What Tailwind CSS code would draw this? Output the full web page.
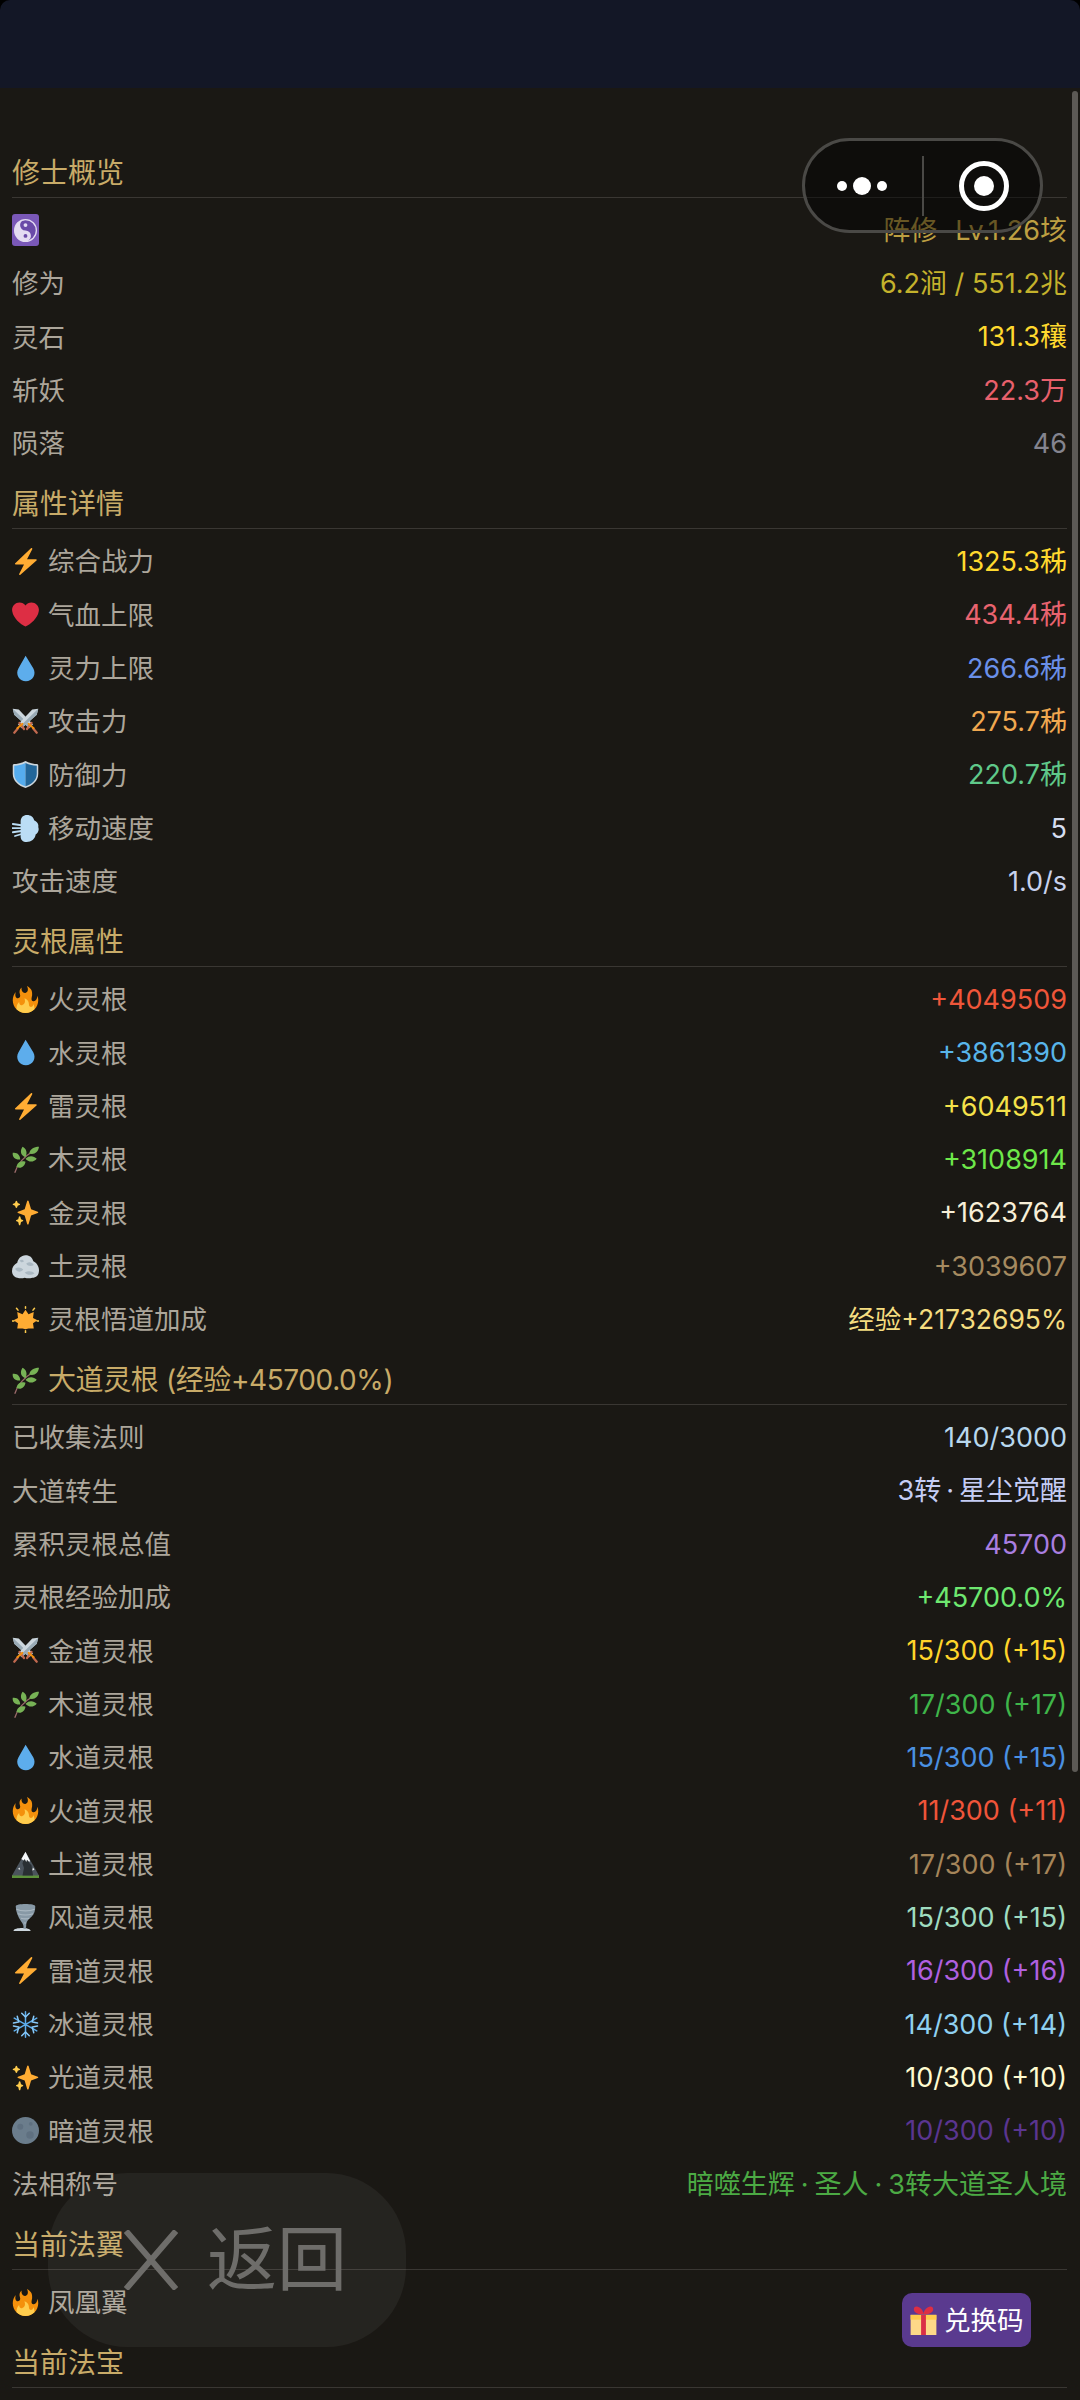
<!DOCTYPE html>
<html lang="zh-CN">
<head>
<meta charset="utf-8">
<title>修士概览</title>
<script src="https://cdn.jsdelivr.net/npm/@tailwindcss/browser@4"></script>
</head>
<body class="bg-black">
<svg class="hidden" xmlns="http://www.w3.org/2000/svg">
  <symbol id="zap" viewBox="0 0 36 36"><path fill="#FFAC33" d="M32 15H20L27 1.500c.5-1-.8-2-1.700-1.100L4.300 20.300C3.500 21 4 22 5 22h11L9.500 34.500c-.5 1 .8 2 1.700 1.100l21.500-19c.7-.7.300-1.600-.7-1.600z"/></symbol>
  <symbol id="heart" viewBox="0 0 36 36"><path fill="#DD2E44" d="M35.885 11.833c0-5.45-4.418-9.868-9.867-9.868-3.308 0-6.227 1.633-8.018 4.129-1.791-2.496-4.71-4.129-8.017-4.129-5.45 0-9.868 4.417-9.868 9.868 0 .772.098 1.52.266 2.241C1.751 22.587 11.216 31.568 18 34.034c6.783-2.466 16.249-11.447 17.617-19.959.17-.721.268-1.469.268-2.242z"/></symbol>
  <symbol id="drop" viewBox="0 0 36 36"><path fill="#5DADEC" d="M28.344 17.768L18.148 1.09 8.7 17.654c-2.2 3.51-2.392 8.074-.081 11.854 3.285 5.373 10.363 7.098 15.811 3.857 5.446-3.24 7.199-10.22 3.914-15.597z"/></symbol>
  <symbol id="fire" viewBox="0 0 36 36"><path fill="#F4900C" d="M35 19c0-2.062-.367-4.039-1.04-5.868-.46 5.389-3.333 8.157-6.335 6.868-2.812-1.208-.917-5.917-.777-8.164.236-3.809-.012-8.169-6.931-11.794 2.875 5.5.333 8.917-2.333 9.125-2.958.231-5.667-2.542-4.667-7.042-3.238 2.386-3.332 6.402-2.333 9 1.042 2.708-.042 4.958-2.583 5.208-2.84.28-4.418-3.041-2.963-8.333C2.52 10.965 1 14.805 1 19c0 9.389 7.611 17 17 17s17-7.611 17-17z"/><path fill="#FFCC4D" d="M28.394 23.999c.148 3.084-2.561 4.293-4.019 3.709-2.106-.843-1.541-2.291-2.083-5.291s-2.625-5.083-5.708-6c2.25 6.333-1.247 8.667-3.08 9.084-1.872.426-3.753-.001-3.968-4.007C7.352 23.668 6 26.676 6 30c0 .368.023.73.055 1.09C9.125 34.124 13.342 36 18 36s8.875-1.876 11.945-4.91c.032-.36.055-.722.055-1.09 0-2.187-.584-4.236-1.606-6.001z"/></symbol>
  <symbol id="sparkles" viewBox="0 0 36 36"><path fill="#FFAC33" d="M34.347 16.893l-8.899-3.294-3.323-10.891c-.128-.42-.517-.708-.956-.708-.439 0-.828.288-.956.708l-3.322 10.891-8.9 3.294c-.393.146-.653.519-.653.938 0 .418.26.793.653.938l8.895 3.293 3.324 11.223c.126.424.516.715.959.715.442 0 .833-.291.959-.716l3.324-11.223 8.896-3.293c.391-.144.652-.518.652-.937 0-.418-.261-.792-.653-.938z"/><path fill="#FFCC4D" d="M14.347 27.894l-2.314-.856-.9-3.3c-.118-.436-.513-.738-.964-.738-.451 0-.846.302-.965.737l-.9 3.3-2.313.856c-.393.145-.653.52-.653.938 0 .418.26.793.653.938l2.301.853.907 3.622c.112.444.511.756.97.756.459 0 .858-.312.97-.757l.907-3.622 2.301-.853c.393-.144.653-.519.653-.937 0-.418-.26-.793-.653-.937zM10.009 6.231l-2.364-.875-.876-2.365c-.145-.393-.519-.653-.938-.653-.418 0-.792.26-.938.653l-.875 2.365-2.365.875c-.393.146-.653.52-.653.938 0 .418.26.793.653.938l2.365.875.875 2.365c.146.393.52.653.938.653.418 0 .792-.26.938-.653l.875-2.365 2.365-.875c.393-.146.653-.52.653-.938 0-.418-.26-.792-.653-.938z"/></symbol>
  <symbol id="herb" viewBox="0 0 36 36"><path fill="none" stroke="#9a6a6a" stroke-width="1.800" stroke-linecap="round" d="M4 35C7 25 13 16 28 7"/><path fill="#77B255" d="M14 1c5 2 7 8 4 14-6-2-8-8-4-14zM23 10c1-6 6-9 13-9-1 7-6 11-13 9zM18 17c5-5 11-4 15 0-4 5-11 5-15 0zM1 9c6-1 10 3 10 9-6 1-11-3-10-9zM6 28c1-6 6-9 12-7-1 6-6 10-12 7z"/></symbol>
  <symbol id="swords" viewBox="0 0 36 36"><path fill="#CCD6DD" d="M1 1l8 1 19 20-5 5L3 9z"/><path fill="#99AAB5" d="M1 1l24.500 23.500-2.500 2.500L3 9z"/><path fill="#CCD6DD" d="M35 1l-8 1L8 22l5 5 20-18z"/><path fill="#99AAB5" d="M35 1L10.500 24.500l2.500 2.500L33 9z"/><path fill="none" stroke="#C1694F" stroke-width="3" stroke-linecap="round" d="M26 20l-6 8M10 20l6 8M28 27l5 6M8 27l-5 6"/><path fill="none" stroke="#F4900C" stroke-width="2.400" stroke-linecap="round" d="M22 21l7 6M14 21l-7 6"/></symbol>
  <symbol id="shield" viewBox="0 0 36 36"><path fill="#CCD6DD" d="M18 0c6 3 11 4 15 4 1 0 2 .7 2 2v11c0 10-8 16-17 19C9 33 1 27 1 17V6c0-1.300 1-2 2-2 4 0 9-1 15-4z"/><path fill="#55ACEE" d="M18 2.500C12.500 5 8 6 3 6.200V17c0 8.800 7 14 15 16.800z"/><path fill="#226699" d="M18 2.500c5.500 2.500 10 3.500 15 3.700V17c0 8.800-7 14-15 16.800z"/></symbol>
  <symbol id="dash" viewBox="0 0 36 36"><path fill="#BBDDF5" d="M20 0c5 0 9 3 9.500 7C33 8.500 36 12 35 16c1.500 4 0 8-3.500 10-.5 6-6 10-12 10-5 0-8-3-8-7.500V8C12 3 15 0 20 0z"/><path fill="none" stroke="#BBDDF5" stroke-width="2.400" stroke-linecap="round" d="M1 12l14 2M0 17.500h15M1 23l14-2M4 28l10-3"/></symbol>
  <symbol id="rock" viewBox="0 0 36 36"><path fill="#CCD6DD" d="M18 3c6 0 9 3 10.500 8C33 13 36 18 36 23c0 7-4 10-9 10-3 1-7 1-10 0-3 1-7 1-10 0-4-1-7-4-7-9 0-5 3-9 7-11 1-5 5-10 11-10z"/><path fill="#AAB8C2" d="M4 21c4-3 8-2 11 1-3 4-8 4-11-1zM19 14c4-3 8-2 10 2-3 2-8 2-10-2zM17 26c5-3 10-2 13 1-4 3-10 3-13-1zM10 10c3-2 5-1 6 1-2 2-4 2-6-1z"/></symbol>
  <symbol id="sun" viewBox="0 0 36 36"><path fill="#FFAC33" d="M18 5l4 6 7-3-1 8 6 3-6 4 1 7-7 0-4 1-4-1-7 0 1-7-6-4 6-3-1-8 7 3z"/><path fill="none" stroke="#FFCC4D" stroke-width="2" stroke-linecap="round" d="M18 1v2M18 33v2.500M0 20h2.500M33.500 20H36M6 3l2 2.500M30 3l-2 2.500"/></symbol>
  <symbol id="mountain" viewBox="0 0 36 36"><path fill="#5C913B" d="M0 32h36v4H0z"/><path fill="#4B545D" d="M18 1L0 32.500h36z"/><path fill="#292F33" d="M18 1l5 15 3 3 2 13.500H14l2-10-2-6z"/><path fill="#F5F8FA" d="M18 1l-5.500 9.500 3 2 1.500-2 2 4 1-3 3 3 1-1.500zM8 24l2-2 1 3zM28 22l2 3-3 1z"/></symbol>
  <symbol id="tornado" viewBox="0 0 36 36"><path fill="#CCD6DD" d="M2 36c0-3 6-4 12-4 5 0 10 1 11 4z"/><path fill="#8899A6" d="M5 3c0-2 6-3 13-3s13 1 13 3c0 6-1 10-5 14-3 3-6 5-7 9 0 3 0 5-1 7h-3c1-3 0-6-3-10C8 17 5 10 5 3z"/><path fill="none" stroke="#AAB8C2" stroke-width="1.600" d="M6 7c6 3 18 3 24 0M8 13c6 2 14 2 20 0M12 19c4 1 8 1 11 0M16 25c1 .5 2 .5 3 0"/></symbol>
  <symbol id="snow" viewBox="0 0 36 36"><g fill="none" stroke="#88C9F9" stroke-width="2" stroke-linecap="round"><path stroke="#5DADEC" d="M18 1v34M3 9.500l30 17M33 9.500l-30 17"/><path d="M13 3l5 5 5-5M13 33l5-5 5 5M2 16l7-1.500L7 7M34 16l-7-1.500L29 7M2 20l7 1.500L7 29M34 20l-7 1.500L29 29"/></g></symbol>
  <symbol id="moon" viewBox="0 0 36 36"><circle fill="#6b7d8c" cx="18" cy="18" r="18"/><circle fill="#5f7080" cx="11" cy="13" r="4"/><circle fill="#5f7080" cx="24" cy="24" r="5"/><circle fill="#5f7080" cx="25" cy="9" r="2.500"/></symbol>
  <symbol id="gift" viewBox="0 0 36 36"><path fill="#FDD888" d="M2 11h32v25H2z"/><path fill="#FFCC4D" d="M2 11h32v6H2z"/><path fill="#DA2F47" d="M15 11h6v25h-6z"/><path fill="#DD2E44" d="M18 10C13 11 6 9 6 4c0-4 4-4 7-2 3 2 5 5 5 8zM18 10c5 1 12-1 12-6 0-4-4-4-7-2-3 2-5 5-5 8z"/></symbol>
</svg>

<div class="relative h-[2400px] w-[1080px] overflow-hidden font-['Inter','Noto_Sans_CJK_SC',sans-serif] text-[26.5px] leading-none text-[#aca69b]">
  <div class="h-[88px] rounded-t-[10px] bg-[#131726]"></div>

  <main class="h-[2312px] bg-[#1a1814] pl-[12px] pr-[13px] pt-[51px]">
    <!-- 修士概览 -->
    <h2 class="mb-[5.67px] h-[59px] border-b border-[#3a3733] pb-[4px] pt-[14px] text-[28px] leading-[40px] font-normal text-[#c8ab68]">修士概览</h2>
    <div class="flex h-[53.33px] items-center justify-between">
      <span class="flex h-[32px] w-[27px] items-center justify-center rounded-[3px] bg-[#7a58b8]">
        <svg class="h-[25px] w-[23px]" viewBox="0 0 36 36"><circle cx="18" cy="18" r="17" fill="#6a4aa8" stroke="#e4dcf2" stroke-width="2"/><path fill="#e4dcf2" d="M18 1a17 17 0 0 0 0 34 8.500 8.500 0 0 0 0-17 8.500 8.500 0 0 1 0-17z"/><circle cx="18" cy="9.500" r="3" fill="#e4dcf2"/><circle cx="18" cy="26.500" r="3" fill="#6a4aa8"/></svg>
      </span>
      <span class="text-[27px] text-[#bd9f42]">阵修<span class="ml-[18px]">Lv.1.26垓</span></span>
    </div>
    <div class="flex h-[53.33px] items-center justify-between"><span>修为</span><span class="text-[27px] text-[#c4b22c]">6.2涧 / 551.2兆</span></div>
    <div class="flex h-[53.33px] items-center justify-between"><span>灵石</span><span class="text-[27px] text-[#ffd92e]">131.3穰</span></div>
    <div class="flex h-[53.33px] items-center justify-between"><span>斩妖</span><span class="text-[27px] text-[#e8606c]">22.3万</span></div>
    <div class="flex h-[53.33px] items-center justify-between"><span>陨落</span><span class="text-[27px] text-[#84848f]">46</span></div>

    <!-- 属性详情 -->
    <h2 class="mb-[5.67px] h-[59px] border-b border-[#3a3733] pb-[4px] pt-[14px] text-[28px] leading-[40px] font-normal text-[#c8ab68]">属性详情</h2>
    <div class="flex h-[53.33px] items-center justify-between"><span class="flex items-center gap-[9px]"><svg class="h-[27px] w-[27px]"><use href="#zap"/></svg>综合战力</span><span class="text-[27px] text-[#ffd92e]">1325.3秭</span></div>
    <div class="flex h-[53.33px] items-center justify-between"><span class="flex items-center gap-[9px]"><svg class="h-[27px] w-[27px]"><use href="#heart"/></svg>气血上限</span><span class="text-[27px] text-[#e8636f]">434.4秭</span></div>
    <div class="flex h-[53.33px] items-center justify-between"><span class="flex items-center gap-[9px]"><svg class="h-[27px] w-[27px]"><use href="#drop"/></svg>灵力上限</span><span class="text-[27px] text-[#6a8fe8]">266.6秭</span></div>
    <div class="flex h-[53.33px] items-center justify-between"><span class="flex items-center gap-[9px]"><svg class="h-[27px] w-[27px]"><use href="#swords"/></svg>攻击力</span><span class="text-[27px] text-[#f0a850]">275.7秭</span></div>
    <div class="flex h-[53.33px] items-center justify-between"><span class="flex items-center gap-[9px]"><svg class="h-[27px] w-[27px]"><use href="#shield"/></svg>防御力</span><span class="text-[27px] text-[#5fc98a]">220.7秭</span></div>
    <div class="flex h-[53.33px] items-center justify-between"><span class="flex items-center gap-[9px]"><svg class="h-[27px] w-[27px]"><use href="#dash"/></svg>移动速度</span><span class="text-[27px] text-[#d5ddf0]">5</span></div>
    <div class="flex h-[53.33px] items-center justify-between"><span>攻击速度</span><span class="text-[27px] text-[#c8d2ee]">1.0/s</span></div>

    <!-- 灵根属性 -->
    <h2 class="mb-[5.67px] h-[59px] border-b border-[#3a3733] pb-[4px] pt-[14px] text-[28px] leading-[40px] font-normal text-[#c8ab68]">灵根属性</h2>
    <div class="flex h-[53.33px] items-center justify-between"><span class="flex items-center gap-[9px]"><svg class="h-[27px] w-[27px]"><use href="#fire"/></svg>火灵根</span><span class="text-[27px] text-[#f0563a]">+4049509</span></div>
    <div class="flex h-[53.33px] items-center justify-between"><span class="flex items-center gap-[9px]"><svg class="h-[27px] w-[27px]"><use href="#drop"/></svg>水灵根</span><span class="text-[27px] text-[#58b5ea]">+3861390</span></div>
    <div class="flex h-[53.33px] items-center justify-between"><span class="flex items-center gap-[9px]"><svg class="h-[27px] w-[27px]"><use href="#zap"/></svg>雷灵根</span><span class="text-[27px] text-[#f5e24a]">+6049511</span></div>
    <div class="flex h-[53.33px] items-center justify-between"><span class="flex items-center gap-[9px]"><svg class="h-[27px] w-[27px]"><use href="#herb"/></svg>木灵根</span><span class="text-[27px] text-[#6ee84a]">+3108914</span></div>
    <div class="flex h-[53.33px] items-center justify-between"><span class="flex items-center gap-[9px]"><svg class="h-[27px] w-[27px]"><use href="#sparkles"/></svg>金灵根</span><span class="text-[27px] text-[#f7efd8]">+1623764</span></div>
    <div class="flex h-[53.33px] items-center justify-between"><span class="flex items-center gap-[9px]"><svg class="h-[27px] w-[27px]"><use href="#rock"/></svg>土灵根</span><span class="text-[27px] text-[#a58a60]">+3039607</span></div>
    <div class="flex h-[53.33px] items-center justify-between"><span class="flex items-center gap-[9px]"><svg class="h-[27px] w-[27px]"><use href="#sun"/></svg>灵根悟道加成</span><span class="text-[26.5px] text-[#f5dd80]">经验+21732695%</span></div>

    <!-- 大道灵根 -->
    <h2 class="mb-[5.67px] flex h-[59px] items-center gap-[9px] border-b border-[#3a3733] pb-[4px] pt-[14px] text-[28px] leading-[40px] font-normal tracking-[-0.4px] text-[#c8ab68]"><svg class="h-[27px] w-[27px]"><use href="#herb"/></svg>大道灵根 (经验+45700.0%)</h2>
    <div class="flex h-[53.33px] items-center justify-between"><span>已收集法则</span><span class="text-[27px] text-[#b8d8ee]">140/3000</span></div>
    <div class="flex h-[53.33px] items-center justify-between"><span>大道转生</span><span class="text-[27px] text-[#c5cdf5]">3转<span class="px-[5px]">·</span>星尘觉醒</span></div>
    <div class="flex h-[53.33px] items-center justify-between"><span>累积灵根总值</span><span class="text-[27px] text-[#a97ee0]">45700</span></div>
    <div class="flex h-[53.33px] items-center justify-between"><span>灵根经验加成</span><span class="text-[27px] text-[#6ee870]">+45700.0%</span></div>
    <div class="flex h-[53.33px] items-center justify-between"><span class="flex items-center gap-[9px]"><svg class="h-[27px] w-[27px]"><use href="#swords"/></svg>金道灵根</span><span class="text-[27px] text-[#ffd42a]">15/300 (+15)</span></div>
    <div class="flex h-[53.33px] items-center justify-between"><span class="flex items-center gap-[9px]"><svg class="h-[27px] w-[27px]"><use href="#herb"/></svg>木道灵根</span><span class="text-[27px] text-[#3fb54a]">17/300 (+17)</span></div>
    <div class="flex h-[53.33px] items-center justify-between"><span class="flex items-center gap-[9px]"><svg class="h-[27px] w-[27px]"><use href="#drop"/></svg>水道灵根</span><span class="text-[27px] text-[#4a90e2]">15/300 (+15)</span></div>
    <div class="flex h-[53.33px] items-center justify-between"><span class="flex items-center gap-[9px]"><svg class="h-[27px] w-[27px]"><use href="#fire"/></svg>火道灵根</span><span class="text-[27px] text-[#f0553a]">11/300 (+11)</span></div>
    <div class="flex h-[53.33px] items-center justify-between"><span class="flex items-center gap-[9px]"><svg class="h-[27px] w-[27px]"><use href="#mountain"/></svg>土道灵根</span><span class="text-[27px] text-[#a5855a]">17/300 (+17)</span></div>
    <div class="flex h-[53.33px] items-center justify-between"><span class="flex items-center gap-[9px]"><svg class="h-[27px] w-[27px]"><use href="#tornado"/></svg>风道灵根</span><span class="text-[27px] text-[#9fdcc0]">15/300 (+15)</span></div>
    <div class="flex h-[53.33px] items-center justify-between"><span class="flex items-center gap-[9px]"><svg class="h-[27px] w-[27px]"><use href="#zap"/></svg>雷道灵根</span><span class="text-[27px] text-[#b060e0]">16/300 (+16)</span></div>
    <div class="flex h-[53.33px] items-center justify-between"><span class="flex items-center gap-[9px]"><svg class="h-[27px] w-[27px]"><use href="#snow"/></svg>冰道灵根</span><span class="text-[27px] text-[#8fd0f0]">14/300 (+14)</span></div>
    <div class="flex h-[53.33px] items-center justify-between"><span class="flex items-center gap-[9px]"><svg class="h-[27px] w-[27px]"><use href="#sparkles"/></svg>光道灵根</span><span class="text-[27px] text-[#fffbd0]">10/300 (+10)</span></div>
    <div class="flex h-[53.33px] items-center justify-between"><span class="flex items-center gap-[9px]"><svg class="h-[27px] w-[27px]"><use href="#moon"/></svg>暗道灵根</span><span class="text-[27px] text-[#5a3590]">10/300 (+10)</span></div>
    <div class="flex h-[53.33px] items-center justify-between"><span>法相称号</span><span class="text-[27px] text-[#4caa44]">暗噬生辉<span class="px-[6px]">·</span>圣人<span class="px-[6px]">·</span>3转大道圣人境</span></div>

    <!-- 当前法翼 -->
    <h2 class="mb-[5.67px] h-[59px] border-b border-[#3a3733] pb-[4px] pt-[14px] text-[28px] leading-[40px] font-normal text-[#c8ab68]">当前法翼</h2>
    <div class="flex h-[53.33px] items-center justify-between"><span class="flex items-center gap-[9px]"><svg class="h-[27px] w-[27px]"><use href="#fire"/></svg>凤凰翼</span></div>

    <!-- 当前法宝 -->
    <h2 class="mb-[5.67px] h-[59px] border-b border-[#3a3733] pb-[4px] pt-[14px] text-[28px] leading-[40px] font-normal text-[#c8ab68]">当前法宝</h2>
  </main>

  <!-- scrollbar -->
  <div class="absolute left-[1072px] top-[91px] h-[1681px] w-[6px] rounded-full bg-[#5c5955]"></div>

  <!-- 小程序胶囊 -->
  <div class="absolute left-[802px] top-[138px] flex h-[95px] w-[241px] items-center rounded-full border-[3px] border-[#4a4946] bg-black/45">
    <div class="mr-[4px] flex w-[113px] items-center justify-center gap-[6px]">
      <span class="h-[10px] w-[10px] rounded-full bg-white"></span>
      <span class="h-[18px] w-[18px] rounded-full bg-white"></span>
      <span class="h-[10px] w-[10px] rounded-full bg-white"></span>
    </div>
    <div class="h-[60px] w-[2px] bg-[#4a4946]"></div>
    <div class="flex flex-1 items-center justify-center pl-[3px]">
      <span class="flex h-[50px] w-[50px] items-center justify-center rounded-full border-[5px] border-white">
        <span class="h-[20px] w-[20px] rounded-full bg-white"></span>
      </span>
    </div>
  </div>

  <!-- 返回 -->
  <div class="absolute left-[48px] top-[2173px] flex h-[174px] w-[358px] items-center gap-[29px] rounded-[80px] bg-white/[0.05] pl-[76px] text-[#6e6d6a]">
    <svg class="h-[60px] w-[54px]" viewBox="0 0 54 60"><path fill="none" stroke="#6e6d6a" stroke-width="6" d="M2 1l50 58M52 1L2 59"/></svg>
    <span class="text-[70px]">返回</span>
  </div>

  <!-- 兑换码 -->
  <div class="absolute left-[902px] top-[2293px] flex h-[54px] w-[129px] items-center gap-[6px] rounded-[10px] bg-[#5a3a8f] pl-[7px] text-white">
    <svg class="h-[29px] w-[29px]"><use href="#gift"/></svg>
    <span>兑换码</span>
  </div>
</div>
</body>
</html>
